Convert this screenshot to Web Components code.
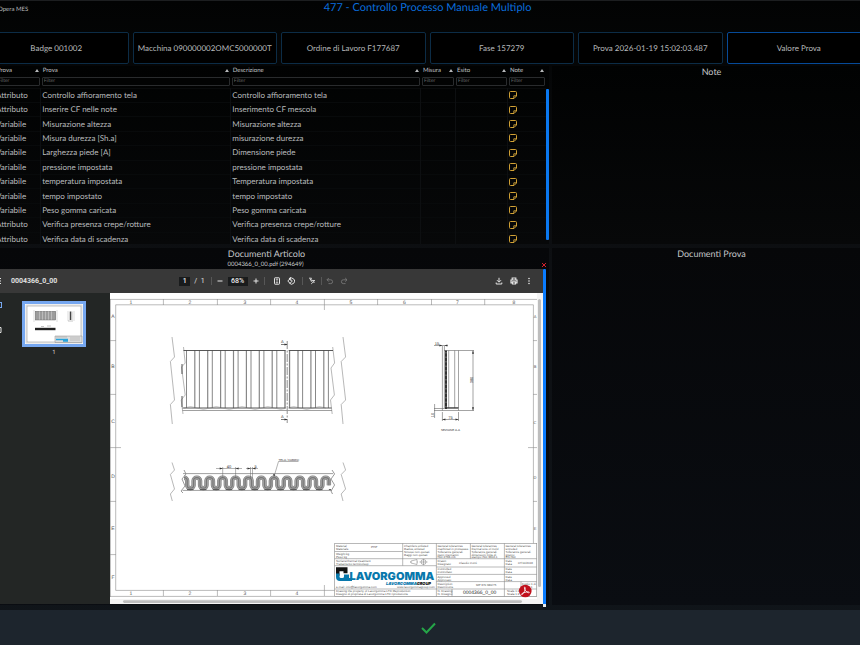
<!DOCTYPE html>
<html lang="it">
<head>
<meta charset="utf-8">
<title>Opera MES - Controllo Processo Manuale Multiplo</title>
<style>
html,body{margin:0;height:100%;background:#020303}
body{overflow:hidden;font-family:Lato,"Liberation Sans",sans-serif;color:#b9bbbd;text-rendering:geometricPrecision}
</style>
</head>
<body>
<mes-app></mes-app>
<script>
const define = (name, html, setup) => {
  const tpl = document.createElement('template');
  tpl.innerHTML = html;
  customElements.define(name, class extends HTMLElement {
    constructor() {
      super();
      this.attachShadow({ mode: 'open' }).append(tpl.content.cloneNode(true));
    }
    connectedCallback() { if (setup) setup(this, this.shadowRoot); }
  });
};

/* ---------- step button ---------- */
define('step-button', `
<style>
:host{display:block;flex:1 1 0;min-width:0}
button{box-sizing:border-box;width:100%;height:32px;padding:0 4px;border:1px solid #0c2c46;border-radius:2px;background:#000;color:#b6b8ba;font:inherit;font-size:8px;line-height:12px;white-space:nowrap;text-rendering:inherit}
:host([active]) button{border-color:#064a98}
</style>
<button type="button"><slot></slot></button>`);

/* ---------- table of tests ---------- */
const rows = [
  ['Attributo','Controllo affioramento tela','Controllo affioramento tela'],
  ['Attributo','Inserire CF nelle note','Inserimento CF mescola'],
  ['Variabile','Misurazione altezza','Misurazione altezza'],
  ['Variabile','Misura durezza [Sh.a]','misurazione durezza'],
  ['Variabile','Larghezza piede [A]','Dimensione piede'],
  ['Variabile','pressione impostata','pressione impostata'],
  ['Variabile','temperatura impostata','Temperatura impostata'],
  ['Variabile','tempo impostato','tempo impostato'],
  ['Variabile','Peso gomma caricata','Peso gomma caricata'],
  ['Attributo','Verifica presenza crepe/rotture','Verifica presenza crepe/rotture'],
  ['Attributo','Verifica data di scadenza','Verifica data di scadenza']
];
const heads = ['Prova','Prova','Descrizione','Misura','Esito','Note'];
const noteIcon = `<svg viewBox="0 0 8 8" width="8" height="8" aria-hidden="true"><path d="M5 7.500H1.500a1 1 0 0 1-1-1V1.500a1 1 0 0 1 1-1h5a1 1 0 0 1 1 1V5z" fill="none" stroke="#d0a034"/><path d="M4.800 7.200V4.800h2.500" fill="none" stroke="#e6b644" stroke-width=".8"/></svg>`;
define('test-table', `
<style>
:host{display:flex;padding-left:11px;height:178px;overflow:hidden}
.wrap{flex:1;min-width:0}
table{table-layout:fixed;border-collapse:collapse;width:100%;height:180px}
th,td{padding:0 2px 0 1px;text-align:left;font-weight:400;overflow:hidden;white-space:nowrap}
th .h{display:flex;justify-content:space-between;align-items:center;font-size:6px;line-height:8px;padding-left:1px;color:#c2c4c6}
thead tr:first-child{height:9px}
thead tr:last-child{height:13px}
thead tr:last-child th{padding:0 1px}
.up{width:0;height:0;border:2px solid transparent;border-top:0;border-bottom:3px solid #b5b7b9}
input{display:block;box-sizing:border-box;width:100%;height:9px;padding:0 1px;border:1px solid #292b2d;border-radius:1px;background:#020303;color:#999;font:inherit;font-size:5px;line-height:7px;text-rendering:inherit}
input::placeholder{color:#66686a;opacity:1}
td{font-size:8px;line-height:11px;border-right:1px solid #0d0f11;border-top:1px solid #080a0b}
td svg{display:block}
td button{display:block;border:0;background:none;padding:0}
td:last-child{border-right:0}
.bar{width:3px;margin:23px 0 4px;background:#0a78f0;border-radius:1px}
</style>
<div class="wrap"><table><colgroup><col style="width:8.300%"><col style="width:34.500%"><col style="width:34.500%"><col style="width:6.200%"><col style="width:9.600%"><col></colgroup><thead><tr></tr><tr></tr></thead><tbody></tbody></table></div>
<div class="bar"></div>`, (host, root) => {
  const [h1, h2] = root.querySelectorAll('thead tr');
  h1.innerHTML = heads.map(h => `<th scope="col"><span class="h">${h}<i class="up"></i></span></th>`).join('');
  h2.innerHTML = heads.map(h => `<th><input placeholder="Filter" aria-label="Filtro ${h}"></th>`).join('');
  root.querySelector('tbody').innerHTML = rows.map(r =>
    `<tr>${r.map(c => `<td>${c}</td>`).join('')}<td></td><td></td><td><button type="button" aria-label="Nota">${noteIcon}</button></td></tr>`).join('');
});

/* ---------- titled panel ---------- */
define('info-panel', `
<style>
:host{display:flex;flex-direction:column;min-width:0;min-height:0;text-align:center}
h2{margin:0;font-size:9px;line-height:12px;font-weight:400;color:#c4c6c8}
</style>
<h2><slot name="title"></slot></h2><slot></slot>`);

/* ---------- technical drawing ---------- */
const serpentine = () => {
  let d = 'M184 477.7a3.200 3 0 0 1 3.200 3v4.500';
  for (let i = 0; i < 11; i++) {
    d += 'a3.200 3 0 0 0 6.400 0v-4.500a3.200 3 0 0 1 6.480 0v4.500';
  }
  return d;
};
const ribs = () => {
  let a = '', b = '';
  for (let i = 0; i < 12; i++) {
    const x = 186.5 + i * 12.9;
    if (x < 332) a += `M${x} 350.5V408`;
    if (x + 8.300 < 330) b += `M${x + 8.300} 350.5V408`;
  }
  return `<path d="${a}" stroke="#555" stroke-width=".7"/><path d="${b}" stroke="#888" stroke-width="1.2"/>`;
};
const t = (x, y, s, txt, extra = '') => `<text x="${x}" y="${y}" font-size="${s}" ${extra}>${txt}</text>`;
const mid = 'text-anchor="middle"';
const sheet = () => `
<svg viewBox="110 293 433 311" role="img" aria-label="Disegno 0004366_0_00">
<rect x="110" y="293" width="433" height="311" fill="#fff"/>
<rect x="537" y="293" width="6" height="311" fill="#f4f4f4"/><rect x="110" y="599" width="433" height="5" fill="#f4f4f4"/>
<g fill="none" stroke="#8b8b8b" stroke-width=".6">
<path d="M110 299.4H537M110 596.4H537M110.400 299V597"/>
<path d="M115.700 304.800H533.400V590.400H115.700z"/>
<path d="M163.400 299v6M217.400 299v6M270.600 299v6M324.400 299v11M377.600 299v6M431.500 299v6M484.700 299v6M163.400 590v6M217.400 590v6M270.600 590v6M324.400 585v11"/>
<path d="M110 340.600h6M110 394.400h6M110 447.600h11M110 501.400h6M110 554.600h6M533 340.600h4M533 394.400h4M528 447.600h9M533 501.400h4"/>
</g>
<g fill="#555" font-family="Liberation Sans,sans-serif" text-anchor="middle">
${[[131,1],[190,2],[245,3],[297,4],[351,5],[404.5,6],[457.5,7],[514,8]].map(([x,n]) => t(x, 304, 5, n)).join('')}
${[[131,1],[190,2],[245,3],[297,4]].map(([x,n]) => t(x, 595.4, 5, n)).join('')}
${[['A',318],['B',368],['C',423],['D',478],['E',530],['F',579]].map(([c,y]) => t(113, y, 5, c)).join('')}
${[['A',318],['B',368],['C',424],['D',479],['E',530]].map(([c,y]) => t(535, y, 4, c)).join('')}
</g>
<g fill="none" stroke="#888" stroke-width=".6">
<path d="M172 337L174.500 357L170.400 361.500L174.500 400L170.400 404.500L172.300 424M343 337L345.600 357L341.200 361.500L345.600 400L341.200 404.500L343 424"/>
<path d="M172 462.500L174.500 470L170.400 474.500L174.500 489L170.400 494L172.300 501M343 462.500L345.600 470L341.200 474.500L345.600 489L341.200 494L343 501"/>
<path d="M183.500 347L185.200 363L181.500 367L185.200 395L181.200 400L183 414M332.700 347L334.600 363L331 368L334.400 395L330.500 400L332.200 414"/>
<path d="M184 470L186 474L182 479L185 486L181 491L183 493M332 470L334.600 474L331 479L334.600 485L331 491L332.500 494" stroke="#555"/>
</g>
<g fill="none">
${ribs()}
<path d="M183.500 350.500H333M182.500 408H331.500" stroke="#444" stroke-width=".9"/><path d="M182.500 410.500H332" stroke="#777" stroke-width=".7"/>
<path d="M184 408q6.500 -3 13 0t12.900 0t12.900 0t12.900 0t12.900 0t12.900 0t12.900 0t12.900 0t12.900 0t12.900 0t12.900 0" stroke="#777" stroke-width=".4"/>
<path d="M182 364v10M182 396v11" stroke="#555" stroke-width="1"/>
<path d="M287.200 350V410" stroke="#fff" stroke-width="3"/>
<path d="M285 350.500V408M289.400 350.500V408" stroke="#666" stroke-width=".6"/>
<path d="M287.200 341V423" stroke="#909090" stroke-width="1" stroke-dasharray="8 1.500 2 1.500"/>
<path d="M281 344.500h6M281 419.500h6" stroke="#222" stroke-width=".6"/>
<path d="M183 473.600H333M182.500 490.400H332" stroke="#888" stroke-width=".8"/>
<path d="${serpentine()}" stroke="#808080" stroke-width="4.400"/>
<path d="${serpentine()}" stroke="#a6a6a6" stroke-width="3.200"/>
<path d="${serpentine()}" stroke="#777" stroke-width="1.200"/>
<path d="M187 489.600h144" stroke="#555" stroke-width="1" stroke-dasharray="6.500 6.400"/>
<path d="M216 468.500h26M222.700 467v11M235.600 467v11M246 468.500h12M250.500 467v11M252.500 467v11M274.200 476L278.500 461.500H298.500" stroke="#666" stroke-width=".5"/>
<path d="M442.400 346V410.500M444.400 346V408M454.700 350.500V408M458.500 350.500V410.500M448.700 350.500V408M444 350.500H474M473 350.500V410.500M434 410.500H474M434 408.500H458M442.400 412V421M458.500 412V421M442.400 419.500H458.500M434 345.500H448M434.600 404V418" stroke="#666" stroke-width=".6"/>
<path d="M446 350.500V409" stroke="#333" stroke-width="2"/><path d="M446 352V408" stroke="#999" stroke-width=".8" stroke-dasharray="1.500 3"/><path d="M445 407.800H458.500" stroke="#333"/>
</g>
<path d="M287.500 344.500l-3 -1.100v2.200zM287.500 419.500l-3 -1.100v2.200zM222.700 468.500l-3 -1v2zM235.600 468.500l3 -1v2zM250.500 468.500l-3 -1v2zM252.500 468.500l3 -1v2zM274 477l-.9 -3l2 .4zM473 350.500l-1 3.200h2zM473 410.500l-1 -3.200h2zM442.400 419.500l3 -1v2zM458.500 419.500l-3 -1v2zM442.400 345.500l-3 -1v2zM444.400 345.500l3 -1v2z" fill="#333"/>
<g fill="#333" font-family="Liberation Sans,sans-serif">
${t(281,343,4,'A')}${t(281,418,4,'A')}${t(229,467.500,4,'40',mid)}${t(255.500,467.500,4,'5',mid)}
${t(278.500,461,3,'TELA / FABRIC')}${t(437,345,4,'15',mid)}${t(450.500,419,4,'75',mid)}
${t(0,0,4,'380',mid+' transform="translate(472.500 380) rotate(-90)"')}${t(0,0,4,'10',mid+' transform="translate(434 415) rotate(-90)"')}
${t(450.500,431,3,'SEZIONE A-A',mid)}
</g>
<g fill="#fff" stroke="#8a8a8a" stroke-width=".6">
<rect x="334.700" y="543.400" width="202" height="53"/>
<path d="M334.700 551.500H402.700M334.700 558.700H536.700M334.700 565.700H436.400M436.400 567H536.700M436.400 574.400H536.700M436.400 581.600H536.700M334.700 589H536.700M402.700 543.400V565.700M436.400 543.400V596.400M470.400 543.400V558.700M504.400 543.400V589M452 589V596.400M521 581.600V589M504.400 589V596.400" fill="none"/>
<circle cx="423.500" cy="562" r="2.500"/><path d="M419.500 562h8M423.500 558.900v6.200M410 562h8" /><path d="M411 561l6 -1.500v5l-6 -1.500z"/>
</g>
<g fill="#555" font-family="Liberation Sans,sans-serif" font-size="3">
${t(336,547,3,'Material')}${t(336,550,3,'Materiale')}${t(371,548,3,'PHP')}${t(336,555,3,'Weight kg')}${t(336,558,3,'Peso kg')}
${t(336,562,3,'Surface/thermal treatment')}${t(336,565,3,'Trattamento termico/sup.')}
${t(404,546.500,3,'Chamfers unlisted')}${t(404,549.500,3,'Radius unlisted')}${t(404,553,3,'Smussi non quotati')}${t(404,556,3,'Raggi non quotati')}
${[437.500,471.500,505.500].map((x,i) => t(x,546.500,3,'General tolerances') + t(x,549.500,3,['machined in processes','thermal size of mold','extruded'][i]) + t(x,552.500,3,'Tolleranze generali') + t(x,555.500,3,['pezzi meccanici','dimensioni finite di','grezzo'][i]) + t(x,558.300,3,['ISO 2768-mK','stampo ISO 3302-1','EN ISO'][i])).join('')}
${t(437.500,562,3,'Drawn')}${t(437.500,565,3,'Disegnato')}${t(459,563.500,3,'Claudio Conti')}${t(505.500,562,3,'Date')}${t(505.500,565,3,'Data')}${t(518,563.500,3,'07/10/2016')}
${t(437.500,570,3,'Controlled')}${t(437.500,573,3,'Controllato')}${t(505.500,570,3,'Date')}${t(505.500,573,3,'Data')}
${t(437.500,577.500,3,'Approved')}${t(437.500,580.500,3,'Approvato')}${t(505.500,577.500,3,'Date')}${t(505.500,580.500,3,'Data')}
${t(437.500,585,3,'Description')}${t(437.500,588,3,'Descrizione')}${t(476,586,3,'MP 370 380/75')}${t(522,584.500,3,'Foglio 1 di')}${t(522,588,3,'Sheet 1')}
${t(437.500,592,3,'N. Drawing')}${t(437.500,595,3,'N. Disegno')}${t(507,592,3,'Scale 1:2')}${t(507,595,3,'Scala 1:2')}
${t(336,592.200,3,'Drawing the property of Lavorgomma LTD Reproduction')}${t(336,595.200,3,'Disegno di proprieta di Lavorgomma LTD riproduzione')}
${t(336,588,3,'e-mail: info@lavorgomma.com')}${t(397,588,3,'www.lavorgommagroup.com')}
${t(463,594.300,5,'0004366_0_00','fill="#222"')}
</g>
<path d="M336 567.300h11.500v6h-4v-2h-4v4.500h-3.500z" fill="#111"/>
<path d="M336 573.500h3.500v3a1.500 1.500 0 0 0 1.500 1.500h1.500a1.500 1.500 0 0 0 1.500 -1.500v-2h5v3.500h3v3H340a4 4 0 0 1 -4 -4z" fill="#0878ac"/>
<g font-family="Inter,sans-serif" font-weight="900">${t(349.500,580,11,'LAVORGOMMA','fill="#0878ac"')}
<text x="386" y="584.600" font-size="4" font-style="italic" fill="#0878ac">LAVORGOMMA<tspan fill="#111">GROUP</tspan></text></g>
<circle cx="525.300" cy="591" r="6.300" fill="#c0101c"/>
<path d="M522 594.600c1.800-1 3.300-4.300 3.200-6.800c0-.9-.9-.9-.8 0c.2 2.200 2 4.400 4.200 5c1 .2 1-.8 0-.9c-2.300-.2-5 .7-6.800 1.800c-.8.5-.4 1.300.2.900z" fill="none" stroke="#fff" stroke-width=".8"/>
<rect x="538" y="299" width="3" height="288" rx="1.500" fill="#bdbdbd"/><rect x="123" y="600.200" width="399" height="2.800" rx="1.400" fill="#bdbdbd"/>
</svg>`;
define('tech-drawing', `<style>:host{display:block}svg{display:block;width:100%;height:auto}</style>`, (h, root) => {
  root.innerHTML += sheet();
});

define('page-thumb', `
<style>:host{display:block;width:64px}
button{display:block;box-sizing:border-box;width:100%;padding:0;border:3px solid #76a7f0;background:#fff}
svg{display:block;width:100%}
span{display:block;font:6px/12px Roboto,sans-serif;text-align:center;color:#d0d0d0}</style>
<button type="button" aria-label="Pagina 1"><svg viewBox="0 0 58 40" fill="none">
<rect x="1" y="1" width="56" height="38" stroke="#bbb" stroke-width=".5"/><rect x="2" y="2" width="54" height="36" stroke="#888" stroke-width=".5"/>
<rect x="10.500" y="7.500" width="20" height="8.500" fill="#bbb" stroke="#777" stroke-width=".5"/>
<path d="M11 7v9M13 7v9M16 7v9M19 7v9M22 7v9M25 7v9M28 7v9M30 7v9" stroke="#555" stroke-width=".6"/><path d="M9 6v12M32 6v12M43 7v10M49 7v10" stroke="#bbb" stroke-width=".5"/>
<path d="M45.500 7.500v8.500" stroke="#444" stroke-width="1.500"/><path d="M47 7.500v8.500M43 17h5" stroke="#888" stroke-width=".5"/>
<path d="M10 25h20.500" stroke="#222" stroke-width="2.400"/><path d="M16 22.500h3M22 22h4" stroke="#888" stroke-width=".5"/>
<path d="M30 32h27v6.500H30z" fill="#ddd" stroke="#888" stroke-width=".5"/><path d="M31 35.500h12M38 37h5" stroke="#27a3da" stroke-width="1.300"/><path d="M45 34h10M45 36h10M31 33h11" stroke="#999" stroke-width=".5"/>
</svg></button><span>1</span>`);

/* ---------- document viewer ---------- */
const ic = (d, label, extra = '') => `<button type="button" aria-label="${label}" ${extra}><svg viewBox="0 0 8 8">${d}</svg></button>`;
define('pdf-viewer', `
<style>
:host{display:flex;min-width:0;text-align:left;font-family:Roboto,sans-serif;color:#e0e0e0}
.view{flex:1;min-width:0}
.track{position:relative;width:3px;background:#0a7cff;border-radius:1px 1px 0 0}
.track::after{content:"";position:absolute;right:0;bottom:-3px;width:3px;height:3px;background:#e8eaec}
.bar{display:grid;grid-template-columns:1fr auto 1fr;align-items:center;height:24px;background:#383838;font-size:7px}
.left,.mid,.right{display:flex;align-items:center}
.left{padding-left:9px;gap:10px;font-weight:700}
.right{justify-content:flex-end;gap:7px;padding-right:10px}
.mid{gap:4px}
.mid input{box-sizing:border-box;height:9px;border:0;padding:0;background:#191b1c;color:#eee;text-align:center;font:500 7px/9px Roboto,sans-serif}
.pg{width:11px}.zm{width:20px}
button{display:block;border:0;background:none;padding:0;color:#e4e4e4}
button svg{display:block;width:8px;height:8px;fill:none;stroke:currentColor}
button:disabled{color:#777}
i{width:1px;height:8px;background:#575757}
.body{display:grid;grid-template-columns:126px minmax(0,1fr);background:#232625}
.side{display:flex;align-items:flex-start;gap:20px;padding:8px 0 0 10px}
.rail{display:grid;gap:17px}
.rail button:first-child{color:#76a7f0}
</style>
<div class="view">
<div class="bar">
 <div class="left">${ic('<path d="M0 1.500h8M0 4h8M0 6.500h8"/>','Menu')}<span>0004366_0_00</span></div>
 <div class="mid"><input class="pg" value="1" aria-label="Pagina"><span>/&nbsp; 1</span><i style="margin-left:2px"></i>
 ${ic('<path d="M1.500 4h5"/>','Riduci')}<input class="zm" value="68%" aria-label="Zoom">${ic('<path d="M1.500 4h5M4 1.500v5"/>','Ingrandisci')}<i></i>
 ${ic('<rect x="1.500" y=".8" width="5" height="6.400" rx=".6"/><path d="M4 1.800v4.400M3 2.800l1-1l1 1M3 5.200l1 1l1-1" stroke-width=".7"/>','Adatta','style="margin-left:4px"')}
 ${ic('<path d="M2.300 2.200A3 3 0 1 1 2.300 6M.8 4l2.200-2.300l2.300 2.300L3 6.300z"/><path d="M3.800 0L2 2l2 1.400" />','Ruota','style="margin:0 3px 0 2px"')}<i></i>
 ${ic('<path d="M1 1.200h2.500l-1.500 1.800h2.200l-1 1.800M4.200 3.500h2.600l-3.600 3.400M5 4.500l1.500 1.500" stroke-width=".9"/>','Annota','style="margin:0 1px"')}<i></i>
 ${ic('<path d="M2.800 1L1 2.800l1.800 1.800M1 2.800h3.700a1.900 1.900 0 0 1 0 3.800H2.500" stroke-width=".9"/>','Annulla','disabled')}
 ${ic('<path d="M5.200 1L7 2.800L5.200 4.600M7 2.800H3.300a1.900 1.900 0 0 0 0 3.800h2.200" stroke-width=".9"/>','Ripeti','disabled style="margin-left:2px"')}
 </div>
 <div class="right">${ic('<path d="M4 .8v4M2 3.200L4 5.200l2-2M1.200 5.500v1.500h5.600V5.500"/>','Scarica')}${ic('<path d="M2.200 2.500V1h3.600v1.500M2 5.800H1V3h6v2.800H6M2.500 4.800h3v2.200h-3z" stroke-width="1.200"/>','Stampa')}${ic('<g fill="currentColor" stroke="none"><circle cx="4" cy="1.500" r=".8"/><circle cx="4" cy="4" r=".8"/><circle cx="4" cy="6.500" r=".8"/></g>','Altro')}</div>
</div>
<div class="body">
 <div class="side"><div class="rail">${ic('<rect x="1" y="1.500" width="6.500" height="5"/>','Miniature')}${ic('<path d="M.5 1.500h6.500v5H.5"/>','Struttura')}</div><page-thumb></page-thumb></div>
 <tech-drawing></tech-drawing>
</div>
</div>
<div class="track"></div>`);

/* ---------- application ---------- */
define('mes-app', `
<style>
:host{display:flex;flex-direction:column;min-height:100vh;margin:0 -11px 0 -16px;box-sizing:border-box;border-top:1px solid #1c1e20;background:linear-gradient(#020303,#0d0f12 40%,#10151a)}
header{display:grid;grid-template-columns:1fr auto 1fr;align-items:start;height:31px}
.brand{padding:4px 0 0 14px;font-size:6px;line-height:9px}
h1{margin:0;font-size:11px;line-height:13px;font-weight:400;color:#0a6ddc}
nav{display:flex;gap:4px;padding-bottom:2px}
main{display:grid;grid-template-columns:565px minmax(0,1fr);grid-template-rows:auto 1fr;gap:4px 3px;flex:1}
main>*{background:linear-gradient(#010202,#070809)}
main>.low{background:linear-gradient(#060709,#0a0d12)}
.file{display:grid;grid-template-columns:1fr auto 1fr;font-size:6px;line-height:9px;padding-right:2px;color:#c8cacc}
.file button{grid-column:3;justify-self:end;padding:0;border:0;background:none;color:#d3202c;line-height:0}
.file span{grid-column:2}
pdf-viewer{margin-right:3px}
footer{display:flex;justify-content:center;align-items:center;height:34px;margin-top:5px;background:#1d252d;padding-top:1px}
footer button{border:0;padding:0;background:none;line-height:0}
</style>
<header><div class="brand">Opera MES</div><h1>477 - Controllo Processo Manuale Multiplo</h1></header>
<nav><step-button>Badge 001002</step-button><step-button>Macchina 090000002OMC5000000T</step-button><step-button>Ordine di Lavoro F177687</step-button><step-button>Fase 157279</step-button><step-button>Prova 2026-01-19 15:02:03.487</step-button><step-button active>Valore Prova</step-button></nav>
<main>
<test-table></test-table>
<info-panel><span slot="title">Note</span></info-panel>
<info-panel class="low"><span slot="title">Documenti Articolo</span>
<div class="file"><span>0004366_0_00.pdf (294649)</span><button type="button" aria-label="Chiudi"><svg width="6" height="6" viewBox="0 0 6 6"><path d="M1 1l4 4M5 1L1 5" stroke="currentColor"/></svg></button></div>
<pdf-viewer></pdf-viewer></info-panel>
<info-panel class="low"><span slot="title">Documenti Prova</span></info-panel>
</main>
<footer><button type="button" aria-label="Conferma"><svg width="16" height="12" viewBox="0 0 16 12"><path d="M2 6l4.500 4.500L15 1.500" fill="none" stroke="#25a548" stroke-width="2"/></svg></button></footer>`);
</script>
</body>
</html>
